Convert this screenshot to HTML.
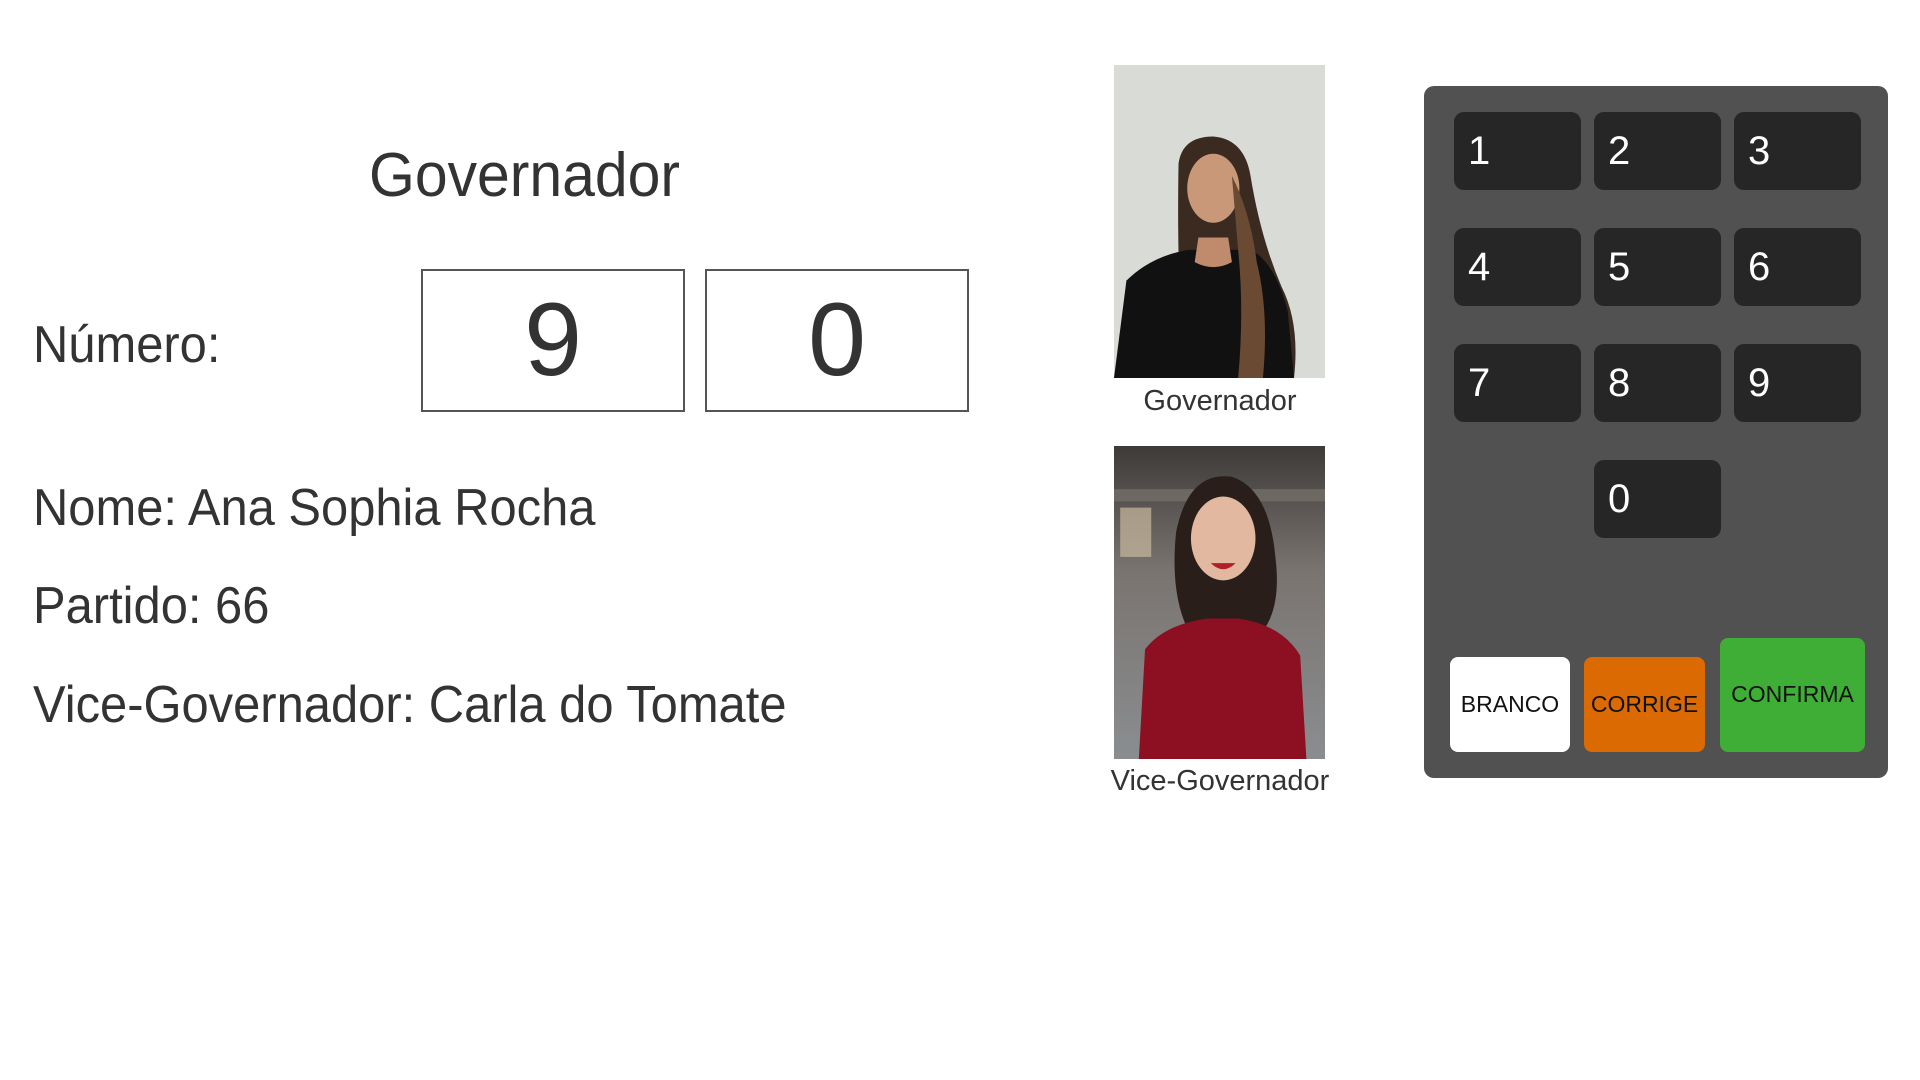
<!DOCTYPE html>
<html><head><meta charset="utf-8"><style>
*{margin:0;padding:0;box-sizing:border-box}
body{width:1920px;height:1080px;background:#fff;font-family:"Liberation Sans",sans-serif;color:#333;position:relative;overflow:hidden}
.a{position:absolute;white-space:nowrap;transform-origin:0 0}
.box{position:absolute;top:269px;width:264px;height:143px;border:2px solid #555;font-size:104px;text-align:center;line-height:139px;color:#333}
.big{font-size:52px;transform:scaleX(0.94)}
.panel{position:absolute;left:1424px;top:86px;width:464px;height:692px;background:#515151;border-radius:10px}
.k{position:absolute;width:127px;height:78px;background:#262626;border-radius:10px;color:#fff;font-size:40px;line-height:78px;padding-left:14px}
.b{position:absolute;border-radius:8px;font-size:23px;color:#111;text-align:center}
.photo{position:absolute;left:1114px;width:211px;height:313px}
.cap{position:absolute;width:300px;left:1070px;text-align:center;font-size:29px;color:#333}
</style></head><body>
<div class="a" style="left:369px;top:140px;font-size:62px;transform:scaleX(0.95)">Governador</div>
<div class="a big" style="left:33px;top:315px">Número:</div>
<div class="box" style="left:421px">9</div>
<div class="box" style="left:705px">0</div>
<div class="a big" style="left:33px;top:478px">Nome: Ana Sophia Rocha</div>
<div class="a big" style="left:33px;top:576px">Partido: 66</div>
<div class="a big" style="left:33px;top:675px">Vice-Governador: Carla do Tomate</div>

<svg class="photo" style="top:65px" viewBox="0 0 170 254" preserveAspectRatio="none">
<rect width="170" height="254" fill="#d9dbd6"/>
<path d="M52 80 Q55 58 80 58 Q105 60 110 90 Q118 140 135 180 Q150 210 145 254 L60 254 Q50 200 52 80Z" fill="#3a2a20"/>
<path d="M0 254 L10 175 Q30 155 60 150 L110 150 Q130 160 140 200 L145 254Z" fill="#111"/>
<ellipse cx="80" cy="100" rx="21" ry="28" fill="#c89878"/>
<path d="M68 140 L92 140 L95 160 Q80 168 65 160Z" fill="#c08a6c"/>
<path d="M95 90 Q110 120 115 160 Q125 200 120 254 L100 254 Q105 200 100 150Z" fill="#6a4a33"/>
</svg>
<div class="cap" style="top:385px">Governador</div>

<svg class="photo" style="top:446px" viewBox="0 0 170 254" preserveAspectRatio="none">
<defs><linearGradient id="g" x1="0" y1="0" x2="0" y2="1"><stop offset="0" stop-color="#3d3a38"/><stop offset=".4" stop-color="#7a7470"/><stop offset="1" stop-color="#8a8d90"/></linearGradient></defs>
<rect width="170" height="254" fill="url(#g)"/>
<rect x="0" y="35" width="170" height="10" fill="#6e6862"/>
<rect x="5" y="50" width="25" height="40" fill="#c9b9a0" opacity=".7"/>
<path d="M50 70 Q60 20 95 25 Q125 35 130 90 Q135 130 120 150 L60 150 Q45 120 50 70Z" fill="#2a1e1a"/>
<ellipse cx="88" cy="75" rx="26" ry="34" fill="#e2b8a0"/>
<path d="M78 95 Q88 105 98 95Z" fill="#b01f2a"/>
<path d="M20 254 L25 165 Q40 145 75 140 L100 140 Q135 145 150 170 L155 254Z" fill="#8d0f22"/>
</svg>
<div class="cap" style="top:765px">Vice-Governador</div>

<div class="panel"></div>
<div class="k" style="left:1454px;top:112px">1</div>
<div class="k" style="left:1594px;top:112px">2</div>
<div class="k" style="left:1734px;top:112px">3</div>
<div class="k" style="left:1454px;top:228px">4</div>
<div class="k" style="left:1594px;top:228px">5</div>
<div class="k" style="left:1734px;top:228px">6</div>
<div class="k" style="left:1454px;top:344px">7</div>
<div class="k" style="left:1594px;top:344px">8</div>
<div class="k" style="left:1734px;top:344px">9</div>
<div class="k" style="left:1594px;top:460px">0</div>
<div class="b" style="left:1450px;top:657px;width:120px;height:95px;background:#fff;line-height:95px">BRANCO</div>
<div class="b" style="left:1584px;top:657px;width:121px;height:95px;background:#db6a03;line-height:95px">CORRIGE</div>
<div class="b" style="left:1720px;top:638px;width:145px;height:114px;background:#3fae37;padding-top:43px">CONFIRMA</div>
</body></html>
